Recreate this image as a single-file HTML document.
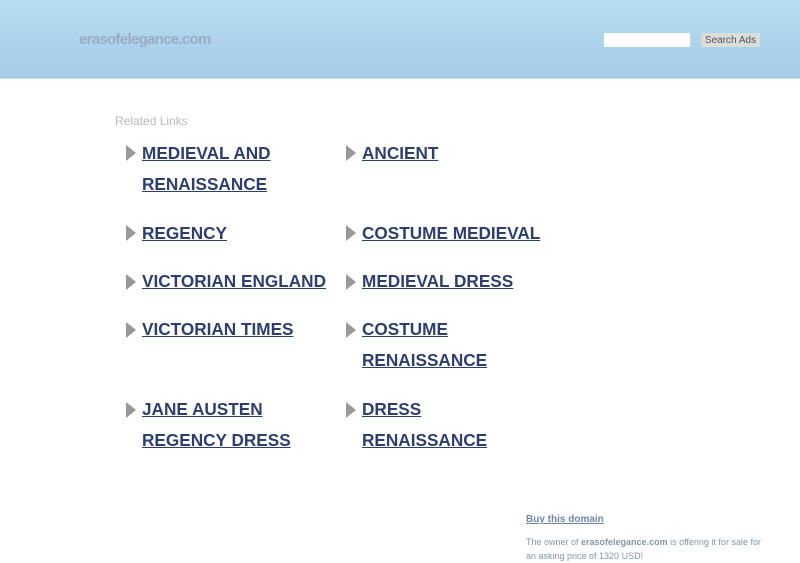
<!DOCTYPE html>
<html><head><style>
body{margin:0;width:800px;height:563px;background:#fff;font-family:"Liberation Sans",Arial,sans-serif;overflow:hidden;position:relative}
.hdr{position:absolute;left:0;top:0;width:800px;height:78px;background:linear-gradient(#b6ddf3,#a5cce5);border-bottom:1px solid #c7dde9}
.logo{position:absolute;left:79px;top:31px;font-size:15px;font-weight:bold;color:#98adc4;letter-spacing:-0.7px}
.inp{position:absolute;left:604px;top:33px;width:86px;height:14px;background:#fff}
.btn{position:absolute;left:701px;top:33px;width:59px;height:14px;background:#dcdcdc;color:#555;font-size:10px;line-height:15px;text-align:center}
.rel{position:absolute;left:115px;top:114px;font-size:12px;color:#b8b8b8}
.it{position:absolute;font-size:17.2px;font-weight:bold;line-height:31px;color:#2d3f6f}
.it span{text-decoration:underline}
.arr{position:absolute;width:0;height:0;border-top:8px solid transparent;border-bottom:8px solid transparent;border-left:10px solid #999}
.buy{position:absolute;left:526px;top:514px;font-size:10px;font-weight:bold;color:#6e86a8;text-decoration:underline}
.own{position:absolute;left:526px;top:535px;width:240px;font-size:9px;line-height:14px;color:#8595a8}
</style></head><body>
<div class="hdr"><div class="logo">erasofelegance.com</div><div class="inp"></div><div class="btn">Search Ads</div></div>
<div class="rel">Related Links</div>

<div class="arr" style="left:126px;top:145px"></div><div class="it" style="left:142px;top:138px"><span>MEDIEVAL AND<br>RENAISSANCE</span></div>
<div class="arr" style="left:346px;top:145px"></div><div class="it" style="left:362px;top:138px"><span>ANCIENT</span></div>

<div class="arr" style="left:126px;top:225px"></div><div class="it" style="left:142px;top:218px"><span>REGENCY</span></div>
<div class="arr" style="left:346px;top:225px"></div><div class="it" style="left:362px;top:218px"><span>COSTUME MEDIEVAL</span></div>

<div class="arr" style="left:126px;top:274px"></div><div class="it" style="left:142px;top:266px"><span>VICTORIAN ENGLAND</span></div>
<div class="arr" style="left:346px;top:274px"></div><div class="it" style="left:362px;top:266px"><span>MEDIEVAL DRESS</span></div>

<div class="arr" style="left:126px;top:322px"></div><div class="it" style="left:142px;top:314px"><span>VICTORIAN TIMES</span></div>
<div class="arr" style="left:346px;top:322px"></div><div class="it" style="left:362px;top:314px"><span>COSTUME<br>RENAISSANCE</span></div>

<div class="arr" style="left:126px;top:402px"></div><div class="it" style="left:142px;top:394px"><span>JANE AUSTEN<br>REGENCY DRESS</span></div>
<div class="arr" style="left:346px;top:402px"></div><div class="it" style="left:362px;top:394px"><span>DRESS<br>RENAISSANCE</span></div>

<div class="buy">Buy this domain</div>
<div class="own">The owner of <b>erasofelegance.com</b> is offering it for sale for an asking price of 1320 USD!</div>
</body></html>
